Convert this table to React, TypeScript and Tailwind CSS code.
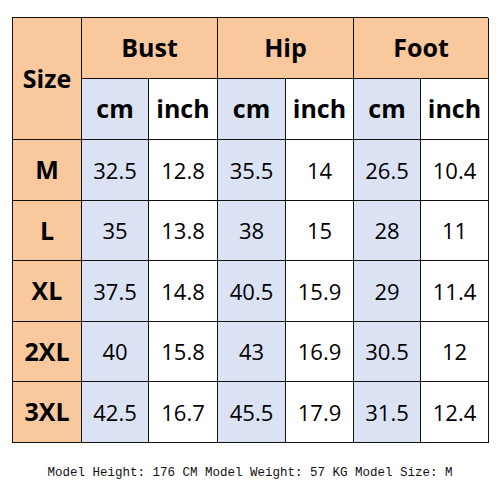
import React from "react";

const ORANGE = "bg-[#f9c89c]";
const BLUE = "bg-[#dae2f4]";

const rows = [
  ["M", "32.5", "12.8", "35.5", "14", "26.5", "10.4"],
  ["L", "35", "13.8", "38", "15", "28", "11"],
  ["XL", "37.5", "14.8", "40.5", "15.9", "29", "11.4"],
  ["2XL", "40", "15.8", "43", "16.9", "30.5", "12"],
  ["3XL", "42.5", "16.7", "45.5", "17.9", "31.5", "12.4"],
];

const cell = "flex items-center justify-center border-r border-b border-[#111]";

export default function App() {
  return (
    <div className="w-[500px] h-[500px] bg-white relative" style={{ fontFamily: '"Open Sans", "Noto Sans", sans-serif' }}>
      <div className="pt-[17px] pl-[12px]">
        <div className="grid w-[476px] border-l border-t border-[#111] grid-cols-[69px_67px_69px_68px_68px_67px_68px] grid-rows-[61px_61px_61px_60px_61px_60px_61px] text-black">
          <div className={`${cell} ${ORANGE} row-span-2 text-[25px] font-bold`}>Size</div>
          <div className={`${cell} ${ORANGE} col-span-2 text-[25px] font-bold`}>Bust</div>
          <div className={`${cell} ${ORANGE} col-span-2 text-[25px] font-bold`}>Hip</div>
          <div className={`${cell} ${ORANGE} col-span-2 text-[25px] font-bold`}>Foot</div>
          {[0, 1, 2].map((i) => (
            <React.Fragment key={i}>
              <div className={`${cell} ${BLUE} text-[25px] font-bold`}>cm</div>
              <div className={`${cell} bg-white text-[25px] font-bold`}>inch</div>
            </React.Fragment>
          ))}
          {rows.map((r) => (
            <React.Fragment key={r[0]}>
              <div className={`${cell} ${ORANGE} text-[25px] font-bold`}>{r[0]}</div>
              {r.slice(1).map((v, j) => (
                <div key={j} className={`${cell} ${j % 2 === 0 ? BLUE : "bg-white"} text-[22px]`}>{v}</div>
              ))}
            </React.Fragment>
          ))}
        </div>
      </div>
      <div className="mt-[21px] text-center text-[12.5px] text-[#111] whitespace-pre" style={{ fontFamily: '"Liberation Mono", monospace' }}>
        Model Height: 176 CM Model Weight: 57 KG Model Size: M
      </div>
    </div>
  );
}
